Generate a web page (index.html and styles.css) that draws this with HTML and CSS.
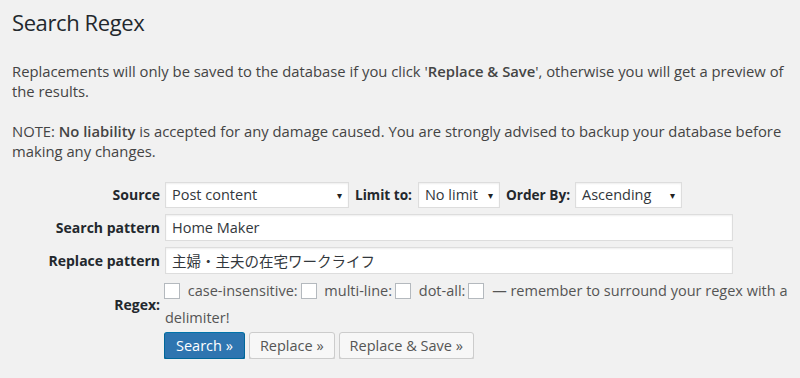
FILE: index.html
```html
<!DOCTYPE html>
<html>
<head>
    <title>Search Regex</title>
    <link rel="stylesheet" href="styles.css">
</head>
<body>
    <div class="wrap">
        <h1>Search Regex</h1>
        <p>Replacements will only be saved to the database if you click '<strong>Replace &amp; Save</strong>', otherwise you will get a preview of the results.</p>
        <p>NOTE: <strong>No liability</strong> is accepted for any damage caused. You are strongly advised to backup your database before making any changes.</p>

        <form class="search-form">
            <table class="form-table">
                <tr>
                    <th>Source</th>
                    <td>
                        <div class="inline-row">
                            <div class="select source-select"><span>Post content</span><i class="arrow">&#9662;</i></div>
                            <label class="inline-label">Limit to:</label>
                            <div class="select limit-select"><span>No limit</span><i class="arrow">&#9662;</i></div>
                            <label class="inline-label">Order By:</label>
                            <div class="select order-select"><span>Ascending</span><i class="arrow">&#9662;</i></div>
                        </div>
                    </td>
                </tr>
                <tr>
                    <th>Search pattern</th>
                    <td><input class="text-input" type="text" value="Home Maker"></td>
                </tr>
                <tr>
                    <th>Replace pattern</th>
                    <td><input class="text-input" type="text" value="主婦・主夫の在宅ワークライフ"></td>
                </tr>
                <tr class="regex-row">
                    <th>Regex:</th>
                    <td class="regex-options">
                        <span class="box"></span> case-insensitive:<span class="box"></span> multi-line:<span class="box"></span> dot-all:<span class="box"></span> &mdash; remember to surround your regex with a delimiter!
                    </td>
                </tr>
            </table>
            <div class="buttons">
                <button type="button" class="button primary">Search &raquo;</button>
                <button type="button" class="button">Replace &raquo;</button>
                <button type="button" class="button">Replace &amp; Save &raquo;</button>
            </div>
        </form>
    </div>
</body>
</html>
```

FILE: styles.css
```css
body {
    margin: 0;
    background-color: #f1f1f1;
    font-family: "Open Sans", "Noto Sans CJK JP", sans-serif;
    color: #444;
    font-size: 13px;
}

.wrap {
    padding: 0 0 0 12px;
}

h1 {
    font-size: 22px;
    font-weight: 400;
    letter-spacing: -0.4px;
    color: #23282d;
    margin: 0;
    padding: 8px 0 4px;
    line-height: 29px;
}

p {
    font-size: 14.8px;
    line-height: 20px;
    margin: 20px 0 0;
    letter-spacing: 0;
    max-width: 782px;
}

p strong {
    font-weight: 600;
}

.search-form {
    margin-top: 17px;
}

.form-table {
    border-collapse: collapse;
    table-layout: fixed;
    width: 786px;
}

.form-table th {
    box-sizing: border-box;
    width: 153px;
    text-align: right;
    font-size: 14px;
    font-weight: 700;
    color: #23282d;
    padding: 0 5px 0 0;
    height: 33px;
    white-space: nowrap;
}

.form-table td {
    padding: 0;
    font-size: 14px;
}

.inline-row {
    display: flex;
    align-items: center;
}

.select {
    height: 26px;
    box-sizing: border-box;
    background: #fff;
    border: 1px solid #ddd;
    box-shadow: inset 0 1px 2px rgba(0,0,0,0.07);
    display: flex;
    align-items: center;
    justify-content: space-between;
    padding: 0 6px 0 6px;
    font-size: 14.5px;
    color: #32373c;
}

.arrow {
    font-style: normal;
    font-size: 10px;
    color: #222;
}

.source-select { width: 184px; }
.limit-select { width: 82px; }
.order-select { width: 107px; }

.inline-label {
    font-size: 13.6px;
    font-weight: 700;
    color: #23282d;
    margin: 0 5px 0 6px;
}

.inline-label + .limit-select {
    margin-left: 1px;
}

.text-input {
    display: block;
    width: 568px;
    height: 27px;
    box-sizing: border-box;
    border: 1px solid #ddd;
    box-shadow: inset 0 1px 2px rgba(0,0,0,0.07);
    background: #fff;
    font-family: "Open Sans", "Noto Sans CJK JP", sans-serif;
    font-size: 14.5px;
    color: #32373c;
    padding: 0 6px;
    margin: 0;
}

.regex-row th {
    vertical-align: middle;
    height: 54px;
}

.regex-options {
    color: #555;
    line-height: 27px;
}

.form-table td.regex-options {
    font-size: 14.5px;
}

.box {
    display: inline-block;
    width: 14px;
    height: 14px;
    border: 1px solid #b4b9be;
    background: #fff;
    vertical-align: -3px;
    margin: 0 4px 0 3px;
}

.regex-options .box:first-child {
    margin-left: -1px;
}

.buttons {
    padding: 1px 0 0 152px;
    display: flex;
    gap: 4px;
}

.button {
    height: 27px;
    font-family: "Open Sans", sans-serif;
    font-size: 14.5px;
    padding: 0 10px;
    border: 1px solid #ccc;
    border-radius: 3px;
    background: #f7f7f7;
    color: #555;
    box-shadow: 0 1px 0 #ccc;
}

.button.primary {
    padding: 0 11px;
    background: #2e75b0;
    border-color: #0073aa #006799 #006799;
    color: #fff;
    box-shadow: 0 1px 0 #006799;
}
```
